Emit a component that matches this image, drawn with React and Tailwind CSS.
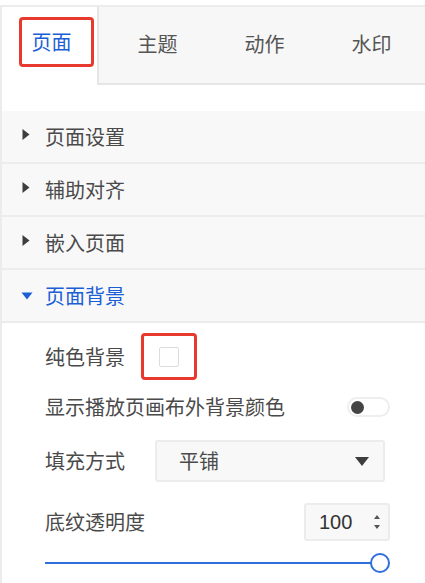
import React from 'react';

const font = { fontFamily: '"Noto Sans CJK SC", "Noto Sans", sans-serif' };

function Caret({ open }) {
  if (open) {
    return (
      <span className="w-[12px] flex justify-start shrink-0">
        <svg width="12" height="8" viewBox="0 0 12 8">
          <path d="M0.5 0.5 L11.5 0.5 L6 7.5 Z" fill="#1a5fd6" />
        </svg>
      </span>
    );
  }
  return (
    <span className="w-[12px] flex justify-start shrink-0 pl-[1px] -mt-[5px]">
      <svg width="8" height="11" viewBox="0 0 8 11">
        <path d="M0.5 0 L7.5 5.5 L0.5 11 Z" fill="#3d3d3d" />
      </svg>
    </span>
  );
}

function Section({ title, open }) {
  return (
    <div className="h-[53px] flex items-center gap-[12px] pl-[19px] bg-[#f8f8f8] border-b-2 border-[#ececec]">
      <Caret open={open} />
      <span className={open ? 'text-[20px] text-[#1a5fd6]' : 'text-[20px] text-[#4a4a4a]'}>{title}</span>
    </div>
  );
}

export default function App() {
  return (
    <div className="w-[425px] h-[583px] bg-white overflow-hidden" style={font}>
      <div className="mt-[5px] border-t-2 border-l-2 border-[#ececec] h-[578px]">
        {/* tabs */}
        <div className="flex h-[78px]">
          <div className="w-[108px] flex items-start justify-center pt-[10px] bg-white">
            <div className="ml-[14px] w-[75px] h-[50px] border-[3px] border-[#e8392f] rounded-[4px] flex items-center justify-center">
              <span className="text-[20px] text-[#1a5fd6] -ml-[10px]">页面</span>
            </div>
          </div>
          <div className="flex-1 flex bg-[#f7f7f7] border-l-2 border-b-2 border-[#e6e6e6] pl-[5px]">
            {['主题', '动作', '水印'].map((t) => (
              <div key={t} className="w-[107px] shrink-0 flex items-center justify-center text-[20px] text-[#555] pb-[2px]">
                {t}
              </div>
            ))}
          </div>
        </div>

        <div className="h-[26px]" />

        <Section title="页面设置" />
        <Section title="辅助对齐" />
        <Section title="嵌入页面" />
        <Section title="页面背景" open />

        {/* content */}
        <div className="pl-[43px] pr-[35px] text-[20px] text-[#4a4a4a]">
          <div className="flex items-center mt-[10px] h-[47px]">
            <span className="w-[96px]">纯色背景</span>
            <div className="w-[56px] h-[47px] border-[3px] border-[#e8392f] rounded-[4px] flex items-center justify-center">
              <div className="w-[20px] h-[20px] border border-[#dcdcdc] bg-white rounded-[2px]" />
            </div>
          </div>

          <div className="flex items-center justify-between mt-[10px] h-[34px]">
            <span>显示播放页画布外背景颜色</span>
            <div className="w-[43px] h-[20px] rounded-full border-2 border-[#eeeeee] bg-white flex items-center pl-[2px]">
              <div className="w-[13px] h-[13px] rounded-full bg-[#444]" />
            </div>
          </div>

          <div className="flex items-center mt-[16px] mr-[5px] h-[42px]">
            <span className="w-[110px] shrink-0">填充方式</span>
            <div className="flex-1 h-[42px] bg-[#f8f8f8] border-2 border-[#ececec] rounded-[3px] flex items-center justify-between pl-[22px] pr-[14px]">
              <span>平铺</span>
              <svg width="14" height="9" viewBox="0 0 14 9">
                <path d="M0 0 L14 0 L7 9 Z" fill="#3d3d3d" />
              </svg>
            </div>
          </div>

          <div className="flex items-center justify-between mt-[21px] h-[38px]">
            <span>底纹透明度</span>
            <div className="w-[86px] h-[38px] bg-[#f8f8f8] border-2 border-[#ececec] rounded-[3px] flex items-center justify-between pl-[13px] pr-[8px]">
              <span className="text-[20px] text-[#333]" style={{ fontFamily: '"Liberation Sans", Arial, sans-serif' }}>100</span>
              <div className="flex flex-col gap-[6px]">
                <svg width="6" height="4" viewBox="0 0 6 4"><path d="M0 4 L3 0 L6 4 Z" fill="#555" /></svg>
                <svg width="6" height="4" viewBox="0 0 6 4"><path d="M0 0 L6 0 L3 4 Z" fill="#555" /></svg>
              </div>
            </div>
          </div>

          <div className="mt-[11px] h-[22px] flex items-center">
            <div className="flex-1 h-[2px] bg-[#2f6fdb]" />
            <div className="w-[20px] h-[20px] -ml-[2px] rounded-full border-2 border-[#2f6fdb] bg-white shrink-0" />
          </div>
        </div>
      </div>
    </div>
  );
}
